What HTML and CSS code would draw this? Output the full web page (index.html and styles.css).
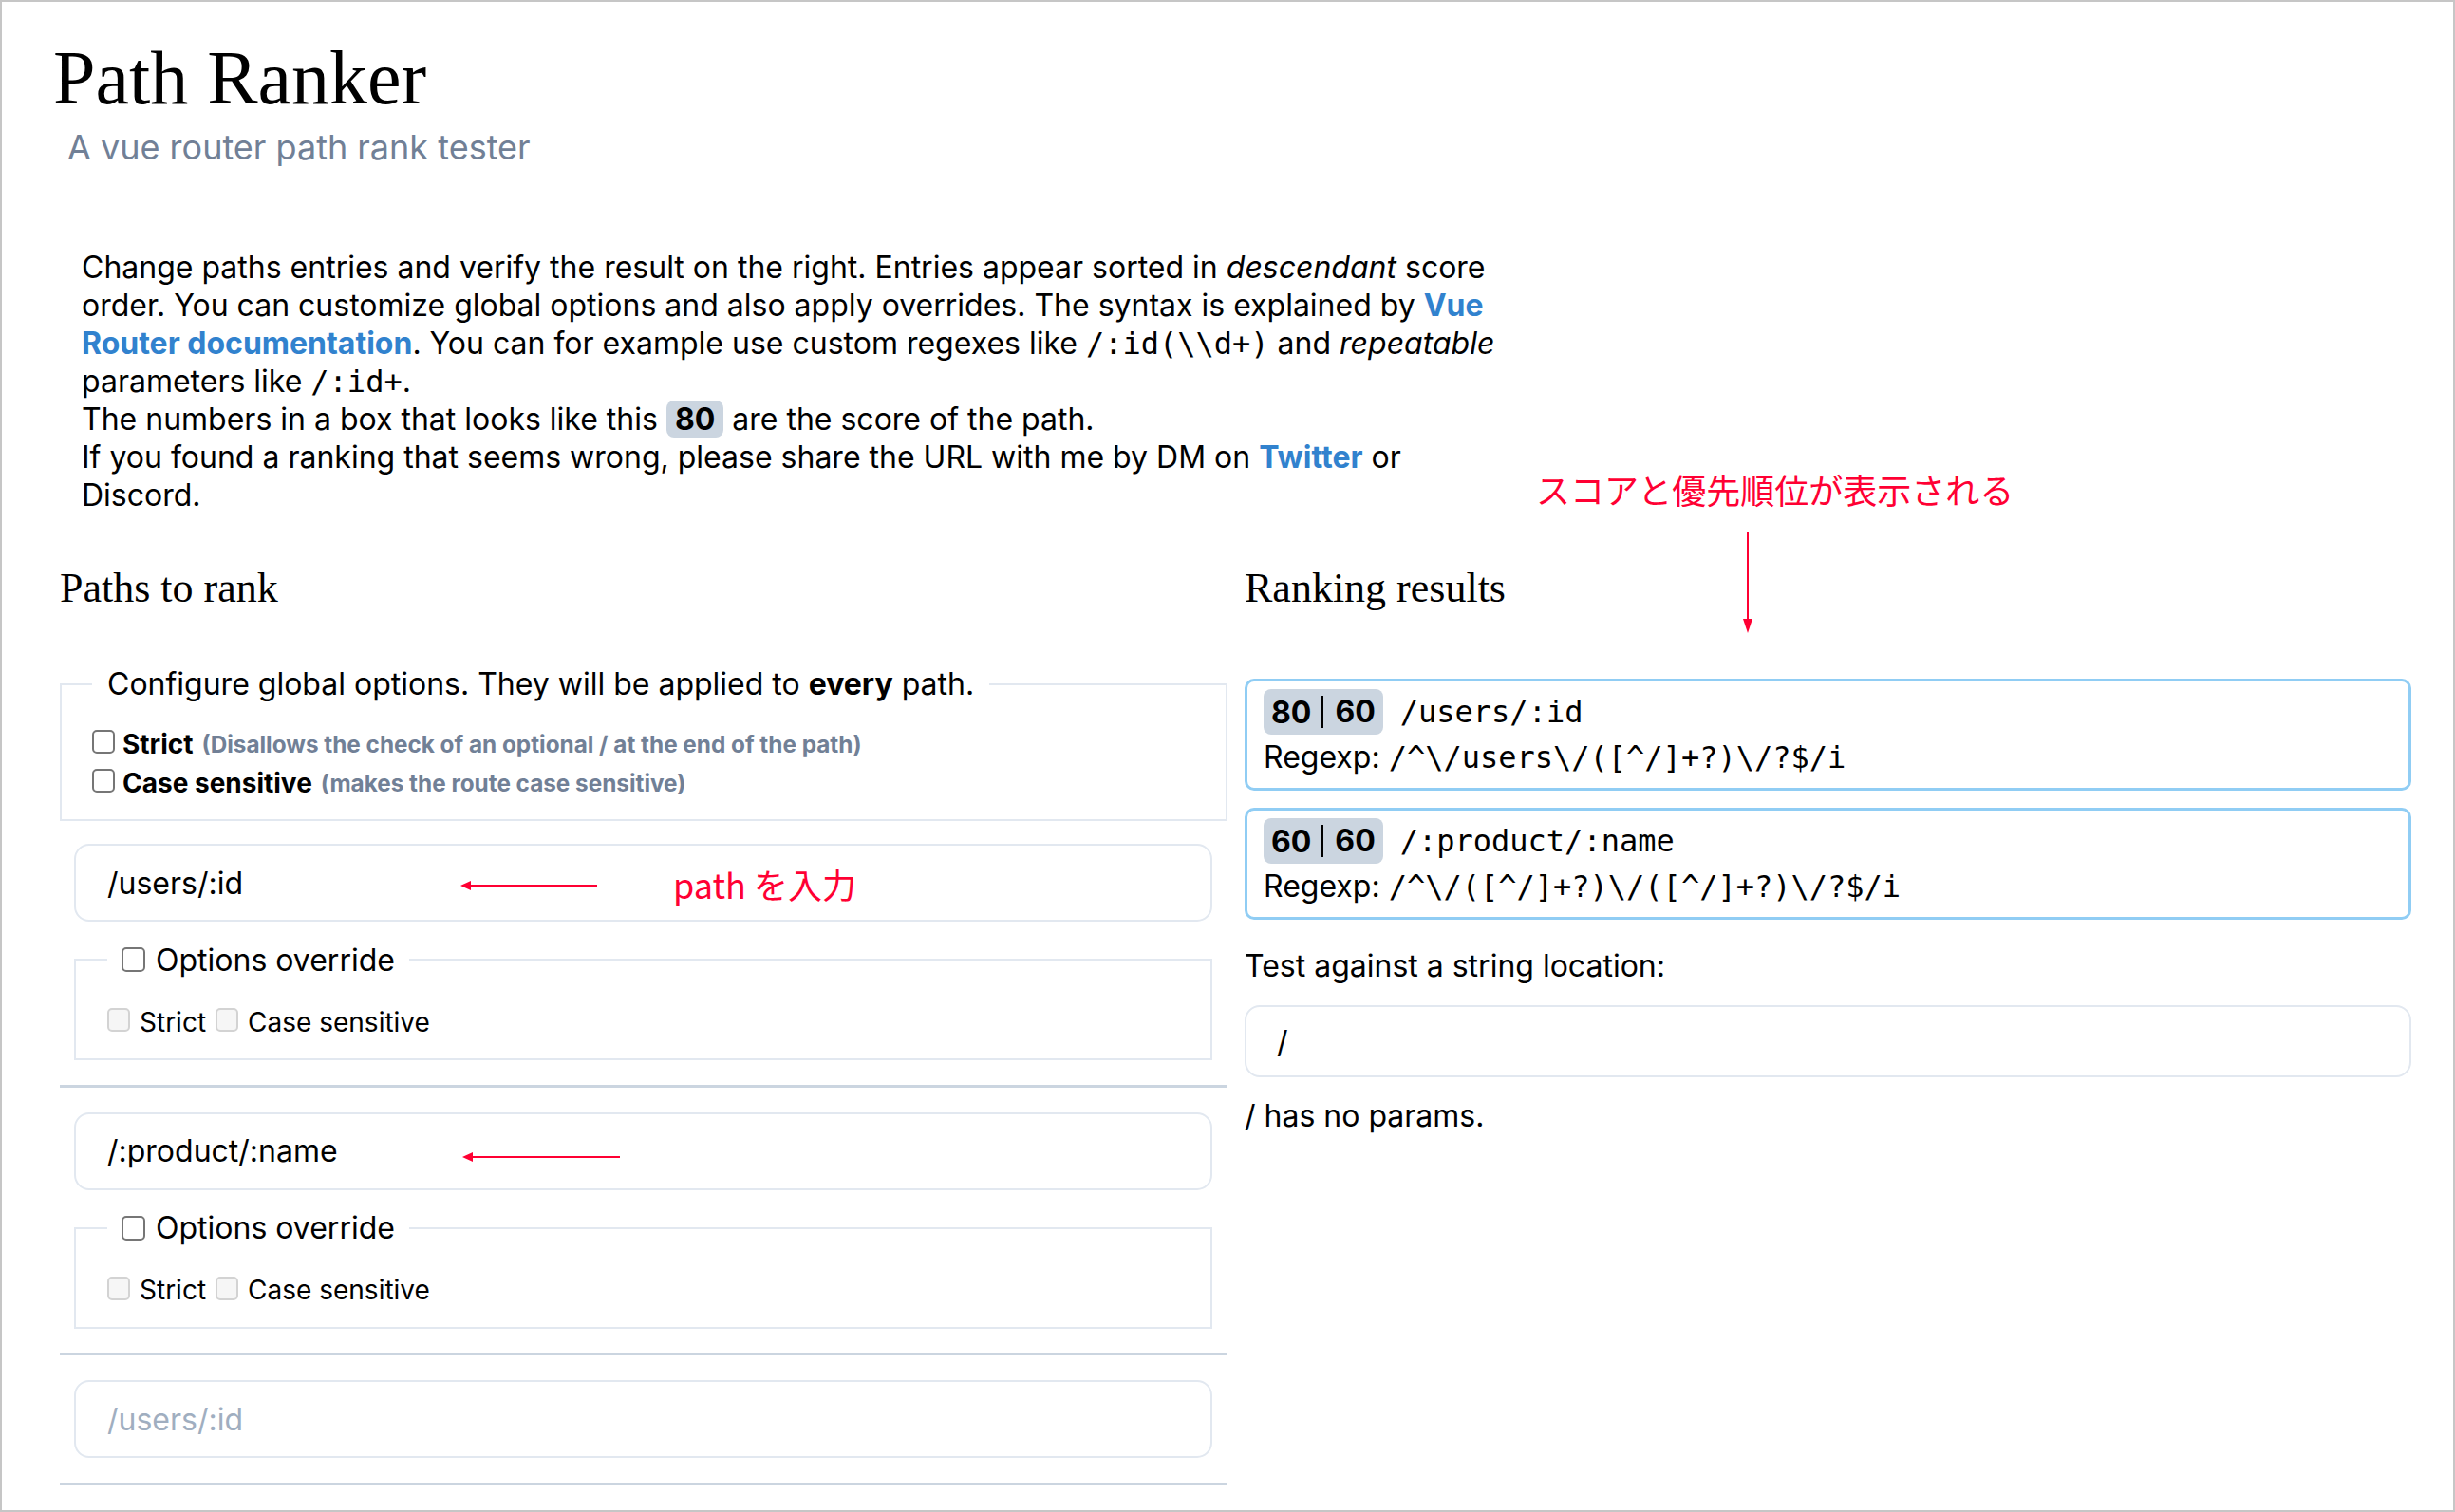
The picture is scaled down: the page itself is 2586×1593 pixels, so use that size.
FILE: index.html
```html
<!DOCTYPE html>
<html lang="en">
<head>
<meta charset="utf-8">
<title>Path Ranker</title>
<link rel="stylesheet" href="styles.css">
</head>
<body>
<div class="frame">
  <h1 class="title">Path Ranker</h1>
  <p class="subtitle">A vue router path rank tester</p>

  <p class="intro">Change paths entries and verify the result on the right. Entries appear sorted in <em>descendant</em> score<br>order. You can customize global options and also apply overrides. The syntax is explained by <a href="#">Vue<br>Router documentation</a>. You can for example use custom regexes like <code>/:id(\\d+)</code> and <em>repeatable</em><br>parameters like <code>/:id+</code>.<br>The numbers in a box that looks like this <span class="score">80</span> are the score of the path.<br>If you found a ranking that seems wrong, please share the URL with me by DM on <a href="#">Twitter</a> or<br>Discord.</p>

  <div class="columns">
    <section class="col">
      <h2 class="heading">Paths to rank</h2>

      <fieldset class="global">
        <legend>Configure global options. They will be applied to <b>every</b> path.</legend>
        <label class="opt"><input class="cb" type="checkbox"><b>Strict</b><span class="hint">(Disallows the check of an optional / at the end of the path)</span></label>
        <label class="opt"><input class="cb" type="checkbox"><b>Case sensitive</b><span class="hint">(makes the route case sensitive)</span></label>
      </fieldset>

      <div class="entry first">
        <input class="path-input" type="text" value="/users/:id">
        <fieldset class="override">
          <legend><label class="ov-legend"><input class="cb" type="checkbox">Options override</label></legend>
          <div class="ov-row"><input class="cb" type="checkbox" disabled><span>Strict</span><input class="cb" type="checkbox" disabled><span>Case sensitive</span></div>
        </fieldset>
      </div>
      <hr class="sep">

      <div class="entry">
        <input class="path-input" type="text" value="/:product/:name">
        <fieldset class="override">
          <legend><label class="ov-legend"><input class="cb" type="checkbox">Options override</label></legend>
          <div class="ov-row"><input class="cb" type="checkbox" disabled><span>Strict</span><input class="cb" type="checkbox" disabled><span>Case sensitive</span></div>
        </fieldset>
      </div>
      <hr class="sep">

      <div class="entry">
        <input class="path-input" type="text" placeholder="/users/:id">
      </div>
      <hr class="sep">
    </section>

    <section class="col">
      <h2 class="heading">Ranking results</h2>

      <div class="card first-card">
        <div class="card-head">
          <span class="badge"><span class="sa">80</span><span class="sb">60</span></span>
          <code class="card-path">/users/:id</code>
        </div>
        <div class="card-re">Regexp: <code>/^\/users\/([^/]+?)\/?$/i</code></div>
      </div>

      <div class="card">
        <div class="card-head">
          <span class="badge"><span class="sa">60</span><span class="sb">60</span></span>
          <code class="card-path">/:product/:name</code>
        </div>
        <div class="card-re">Regexp: <code>/^\/([^/]+?)\/([^/]+?)\/?$/i</code></div>
      </div>

      <p class="test-label">Test against a string location:</p>
      <input class="loc-input" type="text" value="/">
      <p class="noparams">/ has no params.</p>
    </section>
  </div>

  <div class="note note-right">スコアと優先順位が表示される</div>
  <svg class="arrow-down" width="14" height="110" viewBox="0 0 14 110"><line x1="7" y1="2" x2="7" y2="96" stroke="#ff0033" stroke-width="2"/><polygon points="2,94 12,94 7,109" fill="#ff0033"/></svg>

  <div class="note note-left">path を入力</div>
  <svg class="arrow-left a1" width="146" height="14" viewBox="0 0 146 14"><line x1="10" y1="7" x2="145" y2="7" stroke="#ff0033" stroke-width="2"/><polygon points="1,7 12,2 12,12" fill="#ff0033"/></svg>
  <svg class="arrow-left a2" width="168" height="14" viewBox="0 0 168 14"><line x1="10" y1="7" x2="167" y2="7" stroke="#ff0033" stroke-width="2"/><polygon points="1,7 12,2 12,12" fill="#ff0033"/></svg>
</div>
</body>
</html>
```

FILE: styles.css
```css
html, body {
  margin: 0;
  padding: 0;
  background: #fff;
}

body {
  font-family: Inter, "Noto Sans", "Liberation Sans", sans-serif;
  color: #000;
}

.frame {
  width: 2586px;
  height: 1593px;
  box-sizing: border-box;
  border: 2px solid #c6c6c6;
  position: relative;
  overflow: hidden;
}

.title {
  font-family: "Liberation Serif", "DejaVu Serif", serif;
  font-weight: 400;
  font-size: 80px;
  line-height: 80px;
  margin: 40px 0 0 54px;
}

.subtitle {
  font-size: 36px;
  line-height: 40px;
  color: #718096;
  margin: 13px 0 0 69px;
}

.intro {
  font-size: 32px;
  line-height: 40px;
  margin: 87px 0 0 84px;
  white-space: nowrap;
}

.intro a {
  color: #3182ce;
  font-weight: 700;
  text-decoration: none;
}

code {
  font-family: "DejaVu Sans Mono", "Liberation Mono", monospace;
  font-size: 32px;
}

.score {
  background: #cbd5e0;
  border-radius: 8px;
  font-weight: 700;
  padding: 0 9px;
}

.columns {
  display: grid;
  grid-template-columns: 1230px 1229px;
  column-gap: 18px;
  align-items: start;
  margin: 49px 0 0 61px;
}

.heading {
  font-family: "Liberation Serif", "DejaVu Serif", serif;
  font-weight: 400;
  font-size: 44px;
  line-height: 52px;
  margin: 3px 0 0;
}

/* checkboxes */
.cb {
  appearance: none;
  -webkit-appearance: none;
  box-sizing: border-box;
  border: 2px solid #767676;
  border-radius: 5px;
  background: #fff;
  flex: none;
}

.cb:disabled {
  border-color: #d3d3d3;
  background: #f6f6f6;
}

/* global options */
.global {
  margin: 55px 0 0;
  border: 2px solid #e2e8f0;
  padding: 22px 32px 18px;
  min-width: 0;
}

.global legend {
  padding: 0 16px;
  font-size: 32px;
  line-height: 40px;
}

.opt {
  display: flex;
  align-items: center;
  height: 41px;
  font-size: 28px;
  white-space: nowrap;
}

.opt .cb {
  width: 24px;
  height: 25px;
  margin: 0 8px 4px 0;
}

.hint {
  color: #718096;
  font-weight: 700;
  font-size: 24.3px;
  margin-left: 9px;
}

/* path entries */
.entry {
  margin: 0 16px 0 15px;
}

.entry.first {
  margin-top: 24px;
}

.path-input,
.loc-input {
  display: block;
  width: 100%;
  box-sizing: border-box;
  border: 2px solid #e2e8f0;
  border-radius: 16px;
  font-family: Inter, "Noto Sans", sans-serif;
  font-size: 32px;
  color: #000;
  background: #fff;
  outline: none;
  margin: 0;
}

.path-input {
  height: 82px;
  padding: 0 33px;
}

.path-input::placeholder {
  color: #a0aec0;
}

.override {
  margin: 19px 0 0;
  border: 2px solid #e2e8f0;
  padding: 24px 33px 18px;
  min-width: 0;
}

.override legend {
  padding: 0 15px;
}

.ov-legend {
  display: flex;
  align-items: center;
  height: 42px;
  font-size: 32px;
}

.ov-legend .cb {
  width: 25px;
  height: 26px;
  margin: 0 11px 0 0;
}

.ov-row {
  display: flex;
  align-items: center;
  height: 41px;
  font-size: 28px;
}

.ov-row .cb {
  width: 24px;
  height: 25px;
  margin: 0 10px 4px 0;
}

.ov-row span {
  margin-right: 10px;
}

.sep {
  border: 0;
  height: 3px;
  background: #cbd5e0;
  margin: 25.5px 0 26px;
}

/* results */
.card {
  margin-top: 18px;
  border: 3px solid #90cdf4;
  border-radius: 10px;
  padding: 8px 17px 12px;
  font-size: 32px;
}

.card.first-card {
  margin-top: 69px;
}

.card-head {
  display: flex;
  align-items: center;
  height: 48px;
}

.badge {
  display: flex;
  align-items: center;
  height: 48px;
  background: #cbd5e0;
  border-radius: 8px;
  padding: 0 8px;
  font-weight: 700;
}

.badge .sa {
  padding-right: 10px;
}

.badge .sb {
  border-left: 3px solid #000;
  padding-left: 12px;
  line-height: 34px;
}

.card-path {
  margin-left: 18px;
}

.card-re {
  margin-top: 4px;
  line-height: 40px;
  white-space: nowrap;
}

.test-label {
  margin: 29px 0 0;
  font-size: 32px;
  line-height: 40px;
}

.loc-input {
  margin-top: 21px;
  height: 76px;
  padding: 0 32px;
}

.noparams {
  margin: 21px 0 0;
  font-size: 32px;
  line-height: 40px;
}

/* annotations */
.note {
  position: absolute;
  font-family: "Noto Sans CJK JP", "Noto Sans", sans-serif;
  font-size: 36px;
  line-height: 36px;
  color: #ff0033;
  white-space: nowrap;
}

.note-right {
  left: 1616px;
  top: 495px;
}

.note-left {
  left: 707px;
  top: 911px;
}

.arrow-down {
  position: absolute;
  left: 1832px;
  top: 556px;
}

.arrow-left {
  position: absolute;
}

.arrow-left.a1 {
  left: 482px;
  top: 924px;
}

.arrow-left.a2 {
  left: 484px;
  top: 1210px;
}
```
